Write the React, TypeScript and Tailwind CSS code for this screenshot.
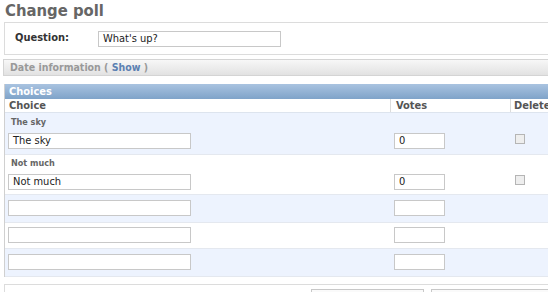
import React from 'react';

interface ChoiceRow {
  label: string;
  choice: string;
  votes: string;
  hasDelete: boolean;
}

const rows: ChoiceRow[] = [
  { label: 'The sky', choice: 'The sky', votes: '0', hasDelete: true },
  { label: 'Not much', choice: 'Not much', votes: '0', hasDelete: true },
  { label: '', choice: '', votes: '', hasDelete: false },
  { label: '', choice: '', votes: '', hasDelete: false },
  { label: '', choice: '', votes: '', hasDelete: false },
];

const Field: React.FC<{ value: string; className: string }> = ({ value, className }) => (
  <div
    className={`h-[16px] border border-[#c8c8c8] bg-white pl-[4px] text-[11px] leading-[14px] text-[#222] ${className}`}
  >
    {value}
  </div>
);

const App: React.FC = () => {
  return (
    <div className="h-[292px] w-[548px] overflow-hidden bg-white font-['DejaVu_Sans_Condensed','Liberation_Sans',sans-serif] text-[#333]">
      <div className="w-[620px]">
        <h1 className="pl-[5px] pt-[1px] text-[16.5px] font-bold leading-[20px] text-[#666]">Change poll</h1>

        {/* question */}
        <div className="ml-[4px] mt-[1px] flex h-[33px] items-center border border-[#dcdcdc] bg-white">
          <span className="w-[93px] pl-[10px] text-[11px] font-bold text-[#333]">Question:</span>
          <Field value="What's up?" className="w-[183px]" />
        </div>

        {/* date info */}
        <div className="ml-[3px] mt-[4px] flex h-[17px] items-center border border-[#d4d4d4] bg-gradient-to-b from-[#f7f7f7] to-[#e2e2e2] pl-[6px] text-[10.5px] font-bold text-[#999]">
          Date information (&nbsp;<span className="text-[#5b80b2]">Show</span>&nbsp;)
        </div>

        {/* choices */}
        <div className="ml-[4px] mt-[8px] border-l border-[#d0d0d0]">
          <div className="flex h-[15px] items-center bg-gradient-to-b from-[#a9c3e0] to-[#7fa3c9] pl-[4px] text-[11px] font-bold leading-[15px] text-white">
            Choices
          </div>
          <div className="grid h-[14px] grid-cols-[385px_120px_1fr] border-b border-[#dde4ee] text-[11px] font-bold leading-[13px] text-[#555]">
            <div className="pl-[4px]">Choice</div>
            <div className="border-l border-[#dcdcdc] pl-[5px]">Votes</div>
            <div className="border-l border-[#dcdcdc] pl-[3px]">Delete</div>
          </div>
          {rows.map((row, i) => (
            <div
              key={i}
              className={`grid grid-cols-[385px_120px_1fr] items-end border-b border-[#e4e8ef] ${
                i % 2 === 0 ? 'bg-[#edf3fe]' : 'bg-white'
              } ${row.label ? (i === 0 ? 'h-[42px] pb-[5px]' : 'h-[40px] pb-[4px]') : i === 3 ? 'h-[26px] pb-[5px]' : 'h-[28px] pb-[6px]'}`}
            >
              <div className="pl-[3px]">
                {row.label && (
                  <div className="mb-[4px] pl-[3px] text-[9px] font-bold leading-[13px] text-[#666]">{row.label}</div>
                )}
                <Field value={row.choice} className="w-[183px]" />
              </div>
              <div className="pl-[4px]">
                <Field value={row.votes} className="w-[51px]" />
              </div>
              <div className="pl-[5px]">
                {row.hasDelete && (
                  <div className="mb-[5px] h-[10px] w-[10px] border border-[#b5b5b5] bg-[#eeeeee]" />
                )}
              </div>
            </div>
          ))}
        </div>

        {/* submit row */}
        <div className="ml-[4px] mt-[7px] h-[20px] border-l border-t border-[#dcdcdc] pt-[4px]">
          <div className="ml-[306px] flex gap-[7px]">
            <div className="h-[12px] w-[113px] border border-[#c8c8c8] bg-[#fafafa]" />
            <div className="h-[12px] w-[130px] border border-[#c8c8c8] bg-[#fafafa]" />
          </div>
        </div>
      </div>
    </div>
  );
};

export default App;
